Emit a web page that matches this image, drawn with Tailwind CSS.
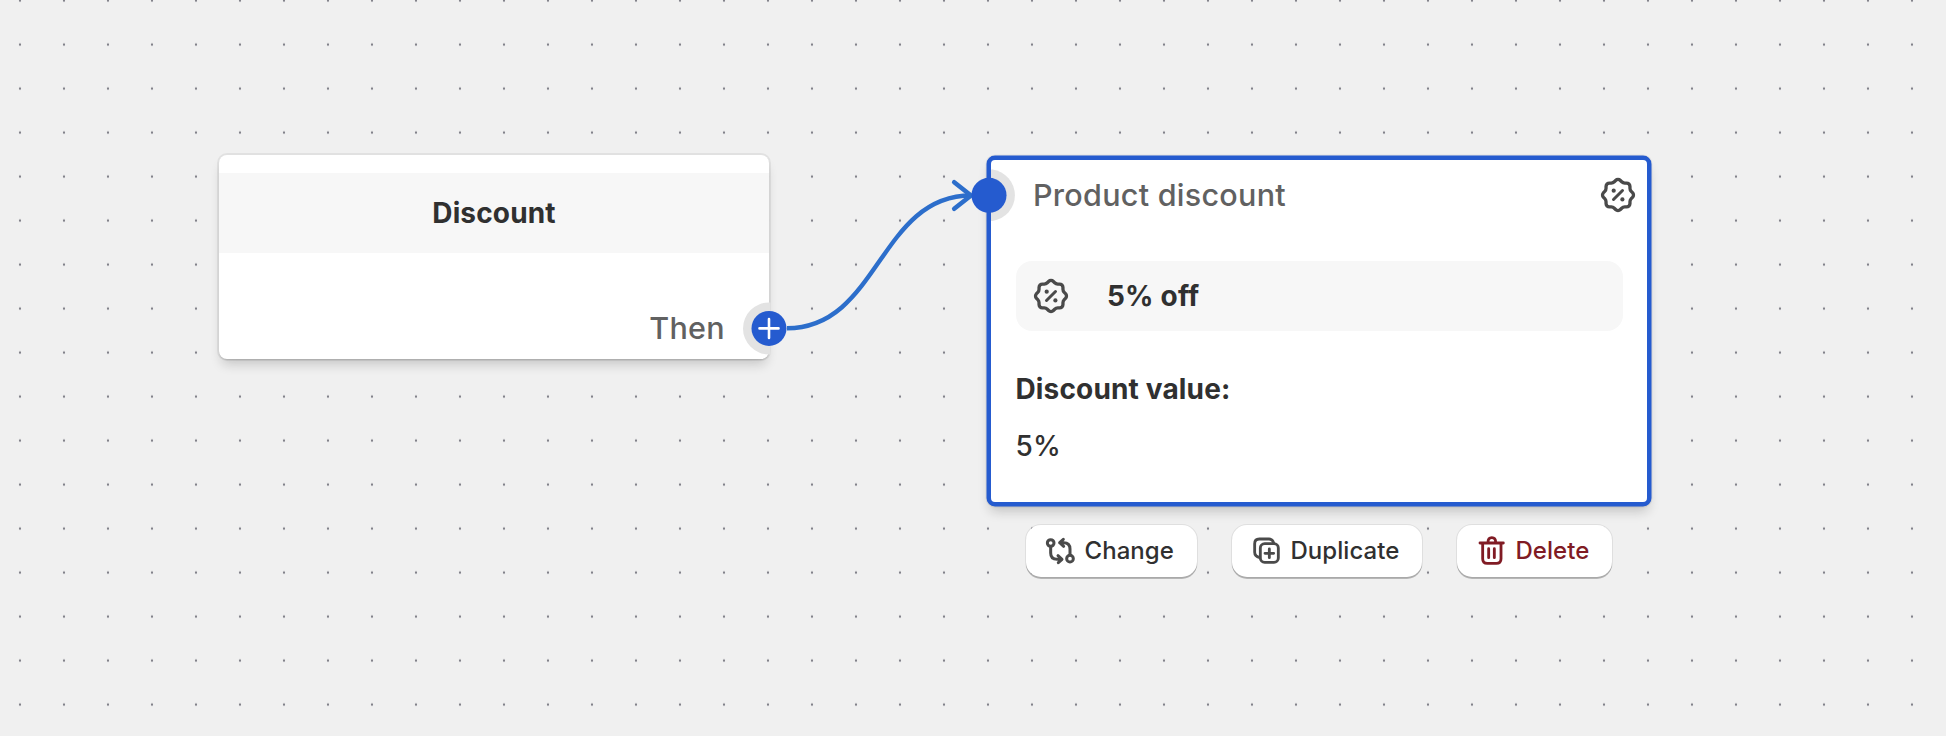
<!DOCTYPE html>
<html lang="en">
<head>
<meta charset="utf-8">
<title>Discount flow</title>
<script src="https://cdn.jsdelivr.net/npm/@tailwindcss/browser@4"></script>
</head>
<body class="font-['Inter',sans-serif]">
<svg class="hidden">
  <symbol id="discount" viewBox="-10 -10 20 20">
    <path fill="none" stroke="#4a4a4a" stroke-width="1.65" stroke-linejoin="round" d="M-1.2-7.25A1.7 1.7 0 0 1 1.2-7.25L1.84-6.62Q2.48-5.98 3.4-5.98L4.28-5.98A1.7 1.7 0 0 1 5.98-4.28L5.98-3.4Q5.98-2.48 6.62-1.84L7.25-1.2A1.7 1.7 0 0 1 7.25 1.2L6.62 1.84Q5.98 2.48 5.98 3.4L5.98 4.28A1.7 1.7 0 0 1 4.28 5.98L3.4 5.98Q2.48 5.98 1.84 6.62L1.2 7.25A1.7 1.7 0 0 1-1.2 7.25L-1.84 6.62Q-2.48 5.98-3.4 5.98L-4.28 5.98A1.7 1.7 0 0 1-5.98 4.28L-5.98 3.4Q-5.98 2.48-6.62 1.84L-7.25 1.2A1.7 1.7 0 0 1-7.25-1.2L-6.62-1.84Q-5.98-2.48-5.98-3.4L-5.98-4.28A1.7 1.7 0 0 1-4.28-5.98L-3.4-5.98Q-2.48-5.98-1.84-6.62Z"/>
    <path stroke="#4a4a4a" stroke-width="1.5" stroke-linecap="round" d="M-2.25 2.25L2.25-2.25"/>
    <circle cx="-2.15" cy="-2.15" r="1.05" fill="#4a4a4a"/><circle cx="2.2" cy="2.2" r="1.05" fill="#4a4a4a"/>
  </symbol>
</svg>
<main class="relative w-[1946px] h-[736px] overflow-hidden bg-[#f0f0f0]">
  <svg class="absolute inset-0" width="1946" height="736">
    <defs><pattern id="dots" x="-2" y="-21.4" width="44" height="44" patternUnits="userSpaceOnUse"><circle cx="22" cy="22" r="1.15" fill="#7b7b84"/></pattern></defs>
    <rect width="1946" height="736" fill="url(#dots)"/>
  </svg>

  <section class="absolute left-[219px] top-[155px] w-[550px] h-[204px] rounded-[8px] bg-white shadow-[0_0_0_2px_rgba(0,0,0,0.06),0_1px_1px_0_rgba(0,0,0,0.1),0_8px_12px_-3px_rgba(26,26,26,0.2)]">
    <div class="h-full rounded-[8px] overflow-hidden flex flex-col pt-[18px]">
      <h2 class="h-[80px] shrink-0 bg-[#f7f7f7] flex items-center justify-center text-[28px] tracking-[0.15px] font-[650] text-[#303030]">Discount</h2>
      <div class="mt-[49px] h-[51px] shrink-0 flex items-center justify-end pr-[44px] text-[30.5px] tracking-[0.3px] font-[500] text-[#616161]">Then</div>
    </div>
  </section>

  <section class="absolute left-[987px] top-[155.7px] w-[664px] h-[350px] rounded-[8px] border-4 border-[#255bcf] bg-white shadow-[0_0_0_0.5px_#255bcf,0_0_0_1.5px_rgba(0,0,0,0.06),0_8px_12px_-3px_rgba(26,26,26,0.22)]">
    <header class="h-[71px] flex items-center justify-between pl-[42px] pr-[9px]">
      <h2 class="text-[30.5px] tracking-[0.27px] font-[500] text-[#616161]">Product discount</h2>
      <svg width="40" height="40"><use href="#discount"/></svg>
    </header>
    <div class="mx-[24.5px] mt-[30.5px] h-[70px] rounded-[16px] bg-[#f7f7f7] flex items-center pl-[15px] gap-[36.5px]">
      <svg width="40" height="40"><use href="#discount"/></svg>
      <span class="pb-px text-[28px] tracking-[0.2px] font-[650] text-[#303030]">5% off</span>
    </div>
    <div class="pl-[24.5px] mt-[38px] text-[28px] leading-[40px] tracking-[0.15px] text-[#303030]">
      <p class="font-[650]">Discount value:</p>
      <p class="mt-[17px] font-[450]">5%</p>
    </div>
  </section>

  <svg class="absolute inset-0" width="1946" height="736" fill="none">
    <path d="M769 302.4A26 26 0 0 0 769 354.4H770.5V302.4Z" fill="#e3e3e3"/>
    <path d="M991 169.5A26 26 0 0 1 991 221Z" fill="#e3e3e3" transform="translate(1.5 0)"/>
    <path d="M991 169.5h2v51.5h-2Z" fill="#e3e3e3"/>
    <path d="M787 328.2C879 328.2 879 195.5 971 195.5" stroke="#2c6ecb" stroke-width="4.4"/>
    <path d="M954.2 182.2L971 195.5L954.2 208.8" stroke="#2c6ecb" stroke-width="4.6" stroke-linecap="round" stroke-linejoin="round"/>
    <circle cx="769" cy="328.4" r="17.5" fill="#255bcf"/>
    <path d="M769 319V338M759.5 328.4H778.5" stroke="#fff" stroke-width="2.6" stroke-linecap="round"/>
    <circle cx="989" cy="195.3" r="17.5" fill="#255bcf"/>
  </svg>

  <div class="absolute left-[1026px] top-[525px] flex gap-[35px] text-[24px] font-[550] text-[#303030]">
    <button class="w-[171px] h-[52px] rounded-[15px] bg-white flex items-center pl-[19px] gap-[7.5px] tracking-[0.05px] shadow-[0_0_0_1px_rgba(0,0,0,0.07),0_2px_0_0_rgba(0,0,0,0.24)]">
      <svg width="32" height="32" viewBox="105 166 96 96" fill="none" stroke="#4a4a4a" stroke-width="9" stroke-linecap="round" stroke-linejoin="round"><circle cx="122" cy="190" r="10"/><circle cx="180" cy="237" r="10"/><path d="M122 202V220Q122 239 141 239H155M144 228L156 239L145 249M180 225V208Q180 189 161 189H149M160 179L149 189L161 200"/></svg>
      <span>Change</span>
    </button>
    <button class="w-[190px] h-[52px] rounded-[15px] bg-white flex items-center pl-[20px] gap-[6.5px] tracking-[0.05px] shadow-[0_0_0_1px_rgba(0,0,0,0.07),0_2px_0_0_rgba(0,0,0,0.24)]">
      <svg width="32" height="32" viewBox="126 166 96 96" fill="none" stroke="#4a4a4a" stroke-width="8.5" stroke-linecap="round" stroke-linejoin="round"><rect x="151" y="192" width="54" height="56" rx="13"/><path d="M191 190Q188 178 177 178H148Q134 178 134 192V218Q134 230 149 234M178 208V234M165 221H191"/></svg>
      <span>Duplicate</span>
    </button>
    <button class="w-[155px] h-[52px] rounded-[15px] bg-white flex items-center pl-[20px] gap-[6.5px] tracking-[0.05px] text-[#801b24] shadow-[0_0_0_1px_rgba(0,0,0,0.07),0_2px_0_0_rgba(0,0,0,0.24)]">
      <svg width="32" height="32" viewBox="111 166 96 96" fill="none" stroke="#801b24" stroke-width="8.5" stroke-linecap="round" stroke-linejoin="round"><path d="M120 190H190M128 190V237Q128 251 142 251H169Q183 251 183 237V190M144 188Q144 174 155.5 174Q167 174 167 188M146 207V234M163 207V234"/></svg>
      <span>Delete</span>
    </button>
  </div>
</main>
</body>
</html>
